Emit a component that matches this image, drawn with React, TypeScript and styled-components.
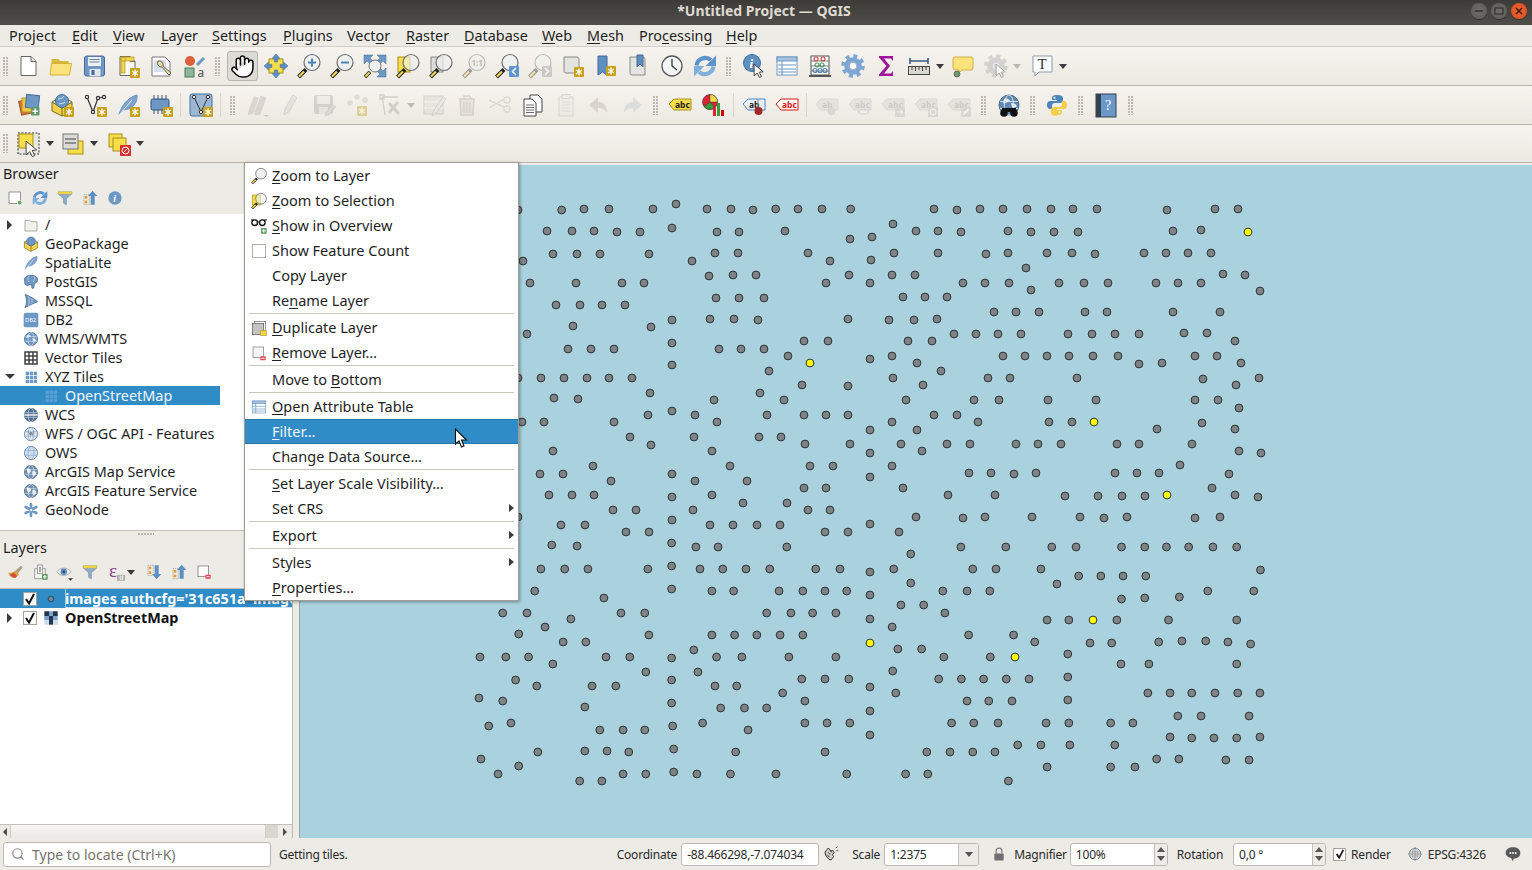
import React from 'react';
import styled, { createGlobalStyle } from 'styled-components';
import { Search, Hand } from 'lucide-react';

const Global = createGlobalStyle`
  html, body { margin: 0; padding: 0; width: 1532px; height: 870px; overflow: hidden; }
  body { font-family: "Noto Sans", "Open Sans", sans-serif; font-size: 14.4px; color: #1f1f1f; background: #edebe6; }
  * { box-sizing: border-box; }
`;

/* ---------- map data: points read from the picture, [x, y] ---------- */
const A: number[][] = [[24,60],[155,60],[222,57],[297,57],[429,57],[498,42],[591,57],[663,57],[729,60],[797,57],[864,57],[936,57],[1022,57],[111,123],[186,123],[252,123],[321,126],[390,126],[486,114],[621,126],[687,126],[825,123],[1020,147],[1086,141],[39,213],[129,192],[201,192],[270,192],[417,192],[546,213],[615,189],[684,189],[894,189],[960,213],[1083,210],[60,279],[198,279],[336,279],[402,279],[597,258],[669,255],[738,255],[948,279],[1017,255],[1080,279],[138,345],[210,345],[276,345],[345,345],[618,324],[687,324],[762,324],[51,432],[189,408],[423,411],[486,390],[600,387],[672,387],[744,390],[1014,387],[174,477],[243,477],[312,477],[486,459],[627,477],[693,477],[762,477],[882,453],[954,453],[834,498],[1080,507],[24,564],[93,564],[162,564],[231,564],[297,564],[366,564],[486,525],[777,543],[876,585],[1014,588],[132,624],[204,627],[420,609],[612,630],[750,609],[822,630],[36,696],[102,696],[312,696],[414,675],[486,663],[555,675],[621,696],[771,675],[882,675],[948,675],[1014,675],[1080,720],[360,741],[423,765],[552,741],[747,741],[813,741],[885,762],[1020,762],[129,783],[606,783],[1080,789],[249,828],[90,852],[159,852],[303,873],[486,852],[555,873],[660,828],[711,873],[900,828],[969,828],[1080,861],[117,915],[186,915],[252,915],[486,921],[606,915],[699,939],[831,939],[882,894],[948,894],[309,960],[378,960],[549,960],[894,960],[960,960],[24,981],[486,990],[153,1005],[225,1005],[600,1005],[669,1005],[741,1005],[810,1005],[1080,1002],[348,1026],[417,1026],[945,1026],[1014,1026]];
const B: number[][] = [[162,57],[231,60],[300,57],[369,57],[441,57],[513,57],[579,57],[651,57],[861,60],[1005,57],[1074,57],[39,102],[108,123],[174,123],[243,126],[384,123],[453,126],[522,126],[594,126],[879,123],[963,120],[42,189],[174,189],[318,192],[384,189],[501,189],[576,189],[645,192],[792,189],[858,189],[924,189],[993,189],[438,234],[36,255],[105,255],[249,279],[315,279],[387,279],[453,300],[537,279],[612,279],[684,279],[828,279],[894,279],[963,279],[1029,252],[1095,255],[1140,303],[69,321],[135,321],[201,321],[342,366],[408,366],[477,366],[615,366],[681,366],[879,366],[1020,366],[27,390],[102,390],[171,387],[222,432],[288,432],[354,432],[423,432],[564,432],[636,432],[705,432],[777,432],[912,429],[981,429],[1065,453],[84,453],[156,453],[36,498],[111,519],[369,498],[435,498],[501,498],[567,498],[639,498],[714,498],[777,522],[846,519],[945,498],[1011,498],[1083,519],[183,543],[39,564],[129,585],[324,564],[390,564],[591,564],[969,567],[1068,585],[1137,564],[78,630],[282,630],[357,630],[504,630],[648,630],[945,630],[1014,630],[1077,654],[162,675],[231,675],[36,696],[111,720],[294,696],[507,696],[576,696],[831,717],[966,699],[1065,717],[63,762],[126,783],[201,762],[270,762],[408,762],[474,762],[543,762],[711,762],[777,762],[936,762],[1077,783],[1143,789],[36,828],[267,849],[333,849],[402,852],[468,849],[705,849],[771,849],[837,849],[900,825],[1047,852],[69,894],[204,915],[345,915],[555,918],[654,918],[726,918],[795,918],[996,894],[1065,915],[1134,921],[108,981],[249,984],[315,981],[456,981],[600,981],[672,984],[741,981],[945,984],[1020,981],[57,1026]];
const C: number[][] = [[168,45],[217,48],[400,39],[447,51],[490,51],[623,51],[960,51],[1047,51],[1136,51],[1183,51],[1271,51],[1316,51],[1358,51],[1401,51],[1448,51],[1494,51],[863,72],[147,117],[193,117],[238,117],[354,117],[400,108],[455,117],[499,117],[544,117],[590,117],[679,117],[726,117],[784,126],[830,117],[983,117],[1028,117],[1115,117],[1188,138],[1231,138],[1274,138],[1318,138],[1540,120],[1146,162],[863,159],[135,183],[269,204],[400,177],[478,183],[520,183],[608,183],[654,183],[697,183],[739,183],[784,195],[925,183],[972,183],[1016,183],[1271,207],[1316,204],[1383,201],[1438,183],[1527,183],[73,249],[120,249],[205,267],[302,249],[348,249],[584,249],[631,249],[673,249],[718,249],[784,267],[844,225],[888,225],[929,249],[1127,270],[1169,270],[1262,270],[1362,270],[1494,270],[155,291],[104,312],[190,336],[234,336],[356,315],[478,315],[522,315],[565,315],[610,315],[654,315],[827,291],[975,315],[1062,315],[1103,336],[1210,339],[1252,339],[1343,336],[1388,333],[1434,333],[1477,336],[1521,342],[29,381],[79,381],[123,381],[170,402],[273,381],[319,381],[400,384],[443,360],[487,381],[536,381],[627,381],[718,381],[838,357],[884,357],[927,381],[1017,381],[1167,372],[1270,402],[1324,402],[1494,402],[98,450],[139,468],[246,468],[292,468],[350,426],[400,450],[451,426],[484,468],[526,468],[652,447],[697,447],[743,447],[784,471],[828,423],[917,447],[961,447],[1004,447],[1048,447],[1092,447],[1167,441],[27,504],[73,513],[232,531],[400,519],[495,534],[541,534],[584,534],[615,489],[658,513],[784,543],[834,489],[972,513],[1014,513],[1059,513],[1167,510],[1322,489],[1365,489],[1407,489],[1452,489],[1496,489],[1539,489],[46,588],[89,579],[261,600],[306,600],[348,600],[402,588],[460,579],[548,600],[658,579],[701,579],[745,579],[784,615],[942,579],[985,579],[1032,579],[1125,579],[1169,579],[1250,579],[1293,579],[1380,558],[1425,558],[1518,558],[141,666],[232,663],[275,663],[317,666],[404,657],[524,666],[697,666],[894,666],[939,666],[983,666],[1026,666],[1070,645],[1115,645],[1171,645],[1258,645],[1365,621],[1407,624],[1450,624],[1494,624],[1539,621],[31,687],[104,708],[64,732],[222,753],[265,753],[306,732],[350,732],[404,726],[449,732],[514,732],[602,732],[739,732],[853,732],[896,732],[1052,753],[1127,711],[1250,711],[1297,711],[1339,687],[1382,687],[1473,690],[1518,690]];
const ORIGIN_X = 300, ORIGIN_Y = 165;
const greyDots = [
  ...A.map(([x, y]) => [510 + x / 3, 190 + y / 3]),
  ...B.map(([x, y]) => [880 + x / 3, 190 + y / 3]),
  ...C.map(([x, y]) => [465 + x / 1.936, 530 + y / 3]),
];
const yellowDots = [[810,363],[1248,232],[1094,422],[1167,495],[1093,620],[870,643],[1015,657]];

/* ---------- icon pieces ---------- */
const Star = ({ x = 14, y = 14 }: { x?: number; y?: number }) => (
  <g transform={`translate(${x} ${y})`}>
    <rect width="10" height="10" rx="1" fill="#c9a01a" />
    <path d="M5 1.500v7M2 3l6 4M8 3L2 7" stroke="#fff" strokeWidth="1.300" />
  </g>
);
const PlusB = ({ x = 15, y = 15 }: { x?: number; y?: number }) => (
  <g transform={`translate(${x} ${y})`}>
    <rect width="8.500" height="8.500" rx="1" fill="#5f9a68" />
    <path d="M4.250 1.500v5.500M1.500 4.250h5.500" stroke="#fff" strokeWidth="1.500" />
  </g>
);
const MinusB = ({ x = 15, y = 17 }: { x?: number; y?: number }) => (
  <g transform={`translate(${x} ${y})`}>
    <rect width="8" height="6" rx="1" fill="#e8434c" />
    <path d="M1.500 3h5" stroke="#fff" strokeWidth="1.400" />
  </g>
);
const Mag = ({ lens = '#eef1f0', opacity = 1, children }: { lens?: string; opacity?: number; children?: React.ReactNode }) => (
  <g>
    <path d="M1.500 23L9 15.500" stroke="#222" strokeWidth="4" />
    <path d="M2 22.500L7 17.500" stroke="#f4d85a" strokeWidth="2.200" />
    <circle cx="15" cy="8.500" r="8" fill={lens} fillOpacity={opacity} stroke="#6b6f6f" strokeWidth="1.200" />
    {children}
  </g>
);
const Page = ({ fill = '#fff', stroke = '#666' }: { fill?: string; stroke?: string }) => (
  <g>
    <path d="M4 2.500h10l5 5v14H4z" fill={fill} stroke={stroke} />
    <path d="M14 2.500v5h5" fill="#ddd" stroke={stroke} />
  </g>
);
const Globe = ({ fill = '#6d97c4', line = '#fff' }: { fill?: string; line?: string }) => (
  <g>
    <circle cx="12" cy="12" r="10" fill={fill} stroke="#46688f" />
    <ellipse cx="12" cy="12" rx="4.500" ry="10" fill="none" stroke={line} strokeOpacity=".7" />
    <path d="M3 8.500h18M3 15.500h18" stroke={line} strokeOpacity=".7" />
  </g>
);
const Label = ({ fill, stroke, color, text = 'abc', x = 5 }: { fill: string; stroke: string; color: string; text?: string; x?: number }) => (
  <g>
    <path d="M1 11l5-5h17v11H6z" fill={fill} stroke={stroke} />
    <text x={x + 2} y="15" fontSize="8.500" fontWeight="700" fill={color} fontFamily="Noto Sans">{text}</text>
  </g>
);
const Feather = ({ s = '#6d97c4' }: { s?: string }) => (
  <g>
    <path d="M3 22C5 13 12 4 21 2c1 7-4 14-13 15" fill="#7ea3cc" stroke={s} />
    <path d="M3 22L16 7" stroke="#fff" strokeWidth=".8" />
  </g>
);
const Vertex = () => (
  <g fill="none" stroke="#333" strokeWidth="1.200">
    <path d="M4 4l6 15 5-14 6-1" />
    <circle cx="4" cy="4" r="1.600" fill="#fff" />
    <circle cx="10" cy="19" r="1.600" fill="#fff" />
    <circle cx="15" cy="5" r="1.600" fill="#fff" />
    <circle cx="21" cy="4" r="1.600" fill="#fff" />
  </g>
);
const Gear = ({ c = '#7ea6d3' }: { c?: string }) => (
  <g fill="none" stroke={c}>
    <circle cx="12" cy="12" r="10" strokeWidth="3.600" strokeDasharray="4 3.850" />
    <circle cx="12" cy="12" r="6.500" strokeWidth="4.500" />
    <circle cx="12" cy="12" r="3.800" fill="#fff" stroke="#4a76a6" strokeWidth=".6" />
  </g>
);
const Arrow = () => <path d="M12 10l.2 12 3-3 2.200 4.500 2-1-2.200-4.300 4-.4z" fill="#fff" stroke="#333" strokeWidth=".9" />;
const GridDots = ({ c }: { c: string }) => (
  <g fill={c}>
    {[3, 9, 15].map((x) => [3, 9, 15].map((y) => <rect key={`${x}${y}`} x={x + 1} y={y + 1} width="5" height="5" />))}
  </g>
);
const Bucket = () => (
  <g>
    <path d="M2 3h20v3l-8 7v9l-4-2v-7L2 6z" fill="#8faccb" stroke="#6f8fb0" />
    <path d="M2 2.500h20v3.500H2z" fill="#f3d94e" stroke="#c9ab2c" strokeWidth=".6" />
  </g>
);
const Refresh = () => (
  <g>
    <g fill="none" strokeWidth="4.200">
      <path d="M3.500 11.500A8.800 8.800 0 0 1 18 6" stroke="#5d94cb" />
      <path d="M20.500 12.500A8.800 8.800 0 0 1 6 18" stroke="#7fb0dc" />
    </g>
    <path d="M23 1.500v10.500H12.500z" fill="#5d94cb" />
    <path d="M1 22.500V12h10.500z" fill="#7fb0dc" />
  </g>
);
const TableI = () => (
  <g>
    <rect x="2" y="3" width="20" height="18" fill="#fff" stroke="#6d97c4" />
    <rect x="2" y="3" width="20" height="4" fill="#a9c2dd" stroke="#6d97c4" />
    <path d="M7 7v14M3 11h18M3 15h18M3 18h18" stroke="#6d97c4" />
  </g>
);

const icons: Record<string, React.ReactNode> = {
  new: <Page />,
  open: <g transform="translate(-1.500 0)"><path d="M3 20V5h7l2 2h8v13z" fill="#d7b83c" /><path d="M1.500 21L3 9.500h20L21 21z" fill="#fbe27a" stroke="#d4b23a" /></g>,
  save: <g transform="translate(-.5 0)"><rect x="2" y="2" width="20" height="20" rx="2" fill="#6d97c4" stroke="#47699a" /><rect x="5.500" y="3" width="13" height="9" fill="#eef2f6" /><path d="M7 5.500h10M7 8h10" stroke="#6d7f95" /><rect x="7" y="15" width="11" height="7" fill="#dfe6ee" /><rect x="9" y="16" width="3" height="5" fill="#47699a" /></g>,
  newLayout: <g><Page fill="#fbfbf8" /><path d="M5 3h4v16H5zM5 3h13v4H5z" fill="#f0d34f" stroke="#b59a1e" strokeWidth=".7" /><Star /></g>,
  layoutMgr: <g><path d="M3 3h13l5 5v14H3z" fill="#fff" stroke="#777" /><rect x="5" y="6" width="12" height="12" fill="#d5e0ea" /><path d="M9 7a4 4 0 0 0 4 6l7 8 2-2-8-7a4 4 0 0 0-5-5z" fill="#eadd9a" stroke="#555" strokeWidth=".9" /></g>,
  style: <g><circle cx="8" cy="7" r="5" fill="#d9603b" /><path d="M15 11l7-7" stroke="#6d97c4" strokeWidth="3" /><rect x="3" y="14" width="9" height="9" fill="#8fb59a" stroke="#4c7a5c" /><text x="15.500" y="22.500" fontSize="12" fill="#555" fontFamily="Noto Sans">a</text></g>,
  panSel: <g><rect x="5" y="5" width="14" height="14" fill="#f6de4b" stroke="#a98f1a" /><path d="M12 0l4 4.500h-2.400V8h-3.200V4.500H8zM12 24l4-4.500h-2.400V16h-3.200v3.500H8zM0 12l4.500-4v2.400H8v3.200H4.500V16zM24 12l-4.500-4v2.400H16v3.200h3.500V16z" fill="#5d8fc0" stroke="#3d6a99" strokeWidth=".5" /></g>,
  zoomIn: <Mag><path d="M15 4.500v8M11 8.500h8" stroke="#4f82b5" strokeWidth="2" /></Mag>,
  zoomOut: <Mag><path d="M11 8.500h8" stroke="#4f82b5" strokeWidth="2" /></Mag>,
  zoomFull: <g><path d="M1 1h9L7 4l3 3-3 3-3-3-3 3zM23 1h-9l3 3-3 3 3 3 3-3 3 3zM23 23h-9l3-3-3-3 3-3 3 3 3-3z" fill="#6d97c4" stroke="#3f6a95" strokeWidth=".5" /><path d="M2 23l5-5" stroke="#222" strokeWidth="3.500" /><path d="M2.500 22.500l4-4" stroke="#f4d85a" strokeWidth="2" /><circle cx="12" cy="12" r="6" fill="#eef1f0" stroke="#777" /></g>,
  zoomSel: <g><rect x="2" y="3" width="12" height="15" fill="#f6de4b" stroke="#a98f1a" /><Mag lens="#eef1f0" opacity={0.65} /></g>,
  zoomLayer: <g><rect x="2" y="3" width="12" height="15" fill="#dedcd8" stroke="#8a8a8a" /><Mag lens="#eef1f0" opacity={0.7} /></g>,
  zoom11: <Mag><text x="9.500" y="11.500" fontSize="8" fontWeight="700" fill="#666" fontFamily="Noto Sans">1:1</text></Mag>,
  zoomLast: <g><Mag /><rect x="14" y="12" width="10" height="11" rx="1" fill="#5d94cb" /><path d="M21 14l-3.500 3.500L21 21" stroke="#fff" strokeWidth="1.600" fill="none" /></g>,
  zoomNext: <g><Mag /><rect x="14" y="12" width="10" height="11" rx="1" fill="#999" /><path d="M17 14l3.500 3.500L17 21" stroke="#fff" strokeWidth="1.600" fill="none" /></g>,
  newView: <g><path d="M3 3h13c2 0 2 2 2 4v12H5c-2 0-2-2-2-3z" fill="#e3e3df" stroke="#888" /><Star x={13} y={13} /></g>,
  newBookmark: <g><path d="M4 2h9v19l-4.500-3L4 21z" fill="#5d8fc0" stroke="#47699a" /><Star x={12} y={12} /></g>,
  showBookmark: <g><path d="M3 3h13c2 0 2 2 2 4v14H5c-2 0-2-2-2-3z" fill="#e3e3df" stroke="#888" /><path d="M10 1h6v12l-3-3-3 3z" fill="#5d8fc0" stroke="#47699a" /></g>,
  clock: <g><circle cx="12" cy="12" r="10" fill="#f3f4f4" stroke="#55595c" strokeWidth="1.300" /><path d="M12 5v7l5 4" stroke="#333" strokeWidth="1.300" fill="none" /></g>,
  refresh: <Refresh />,
  identify: <g><circle cx="10" cy="9" r="8.500" fill="#5d8fc0" stroke="#44709d" /><text x="7.500" y="14" fontSize="13" fontWeight="700" fontStyle="italic" fill="#fff" fontFamily="Liberation Serif">i</text><Arrow /></g>,
  table: <TableI />,
  abacus: <g><rect x="3" y="2" width="18" height="19" fill="#fff" stroke="#555" /><path d="M3 7h18M3 12h18M3 17h18" stroke="#777" /><path d="M1 22h22" stroke="#555" strokeWidth="2" /><g fill="none" strokeWidth="1.200"><g stroke="#c44"><circle cx="8" cy="5" r="2" /><circle cx="15" cy="5" r="2" /></g><g stroke="#4a9a60"><circle cx="9" cy="11" r="2" /><circle cx="14" cy="11" r="2" /></g><g stroke="#4f82b5"><circle cx="7" cy="16.500" r="2" /><circle cx="12" cy="16.500" r="2" /><circle cx="17" cy="16.500" r="2" /></g></g></g>,
  gear: <Gear />,
  sigma: <path d="M5 2h14v5l-2-2.500H10l6 7.500-6 7.500h7l2-2.500v5H5v-1.500l7.500-8.500L5 3.500z" fill="#a0139c" />,
  ruler: <g><path d="M3 7h18M3 4v6M21 4v6" stroke="#3a5a80" strokeWidth="1.600" /><rect x="1.500" y="12.500" width="21" height="8" fill="#d8d8d0" stroke="#444" /><path d="M5 13v3M8.500 13v4M12 13v3M15.500 13v4M19 13v3" stroke="#444" /></g>,
  tip: <g><path d="M3 3h18a2 2 0 0 1 1 2v9a2 2 0 0 1-2 2H11l-3 3v-3H4a2 2 0 0 1-2-2V5z" fill="#fce27a" stroke="#cfae4c" /><circle cx="6" cy="20" r="3" fill="#6d9a68" stroke="#555" strokeWidth=".7" /></g>,
  action: <g><Gear c="#aaa" /><path d="M9.500 8l6 4-6 4z" fill="#ccc" /><Arrow /></g>,
  text: <g><path d="M3 2h19v16H9l-4 4v-4H3z" fill="#fff" stroke="#8a9aa8" /><text x="7.500" y="15" fontSize="15" fill="#333" fontFamily="Liberation Serif">T</text></g>,
  dsm: <g><rect x="3" y="7" width="13" height="14" fill="#d5703c" stroke="#a54f23" transform="rotate(-12 9 14)" /><rect x="5" y="5" width="13" height="14" fill="#f0c840" stroke="#b5951e" /><rect x="9" y="2" width="13" height="13" fill="#6d97c4" stroke="#44709d" transform="rotate(6 15 8)" /><PlusB x={14} y={14} /></g>,
  gpkgNew: <g><path d="M2 9l10 6 10-6v9l-10 5-10-5z" fill="#f2d24a" stroke="#7c6a1c" /><path d="M12 15v8" stroke="#7c6a1c" /><path d="M2 9l10-6 10 6-10 6z" fill="#eee" stroke="#7c6a1c" /><circle cx="12" cy="8" r="6.500" fill="#6d97c4" stroke="#44709d" /><path d="M8 6c3 0 5-1 6-3M9 11c2-1 5 0 6-2" stroke="#d6e2ee" fill="none" /><Star /></g>,
  shpNew: <g><Vertex /><Star /></g>,
  spatNew: <g><Feather /><Star /></g>,
  tempNew: <g><rect x="2" y="6" width="18" height="11" rx="1.500" fill="#6d97c4" stroke="#33557a" /><path d="M5 2v4M9 2v4M13 2v4M17 2v4M5 17v4M9 17v4M13 17v4" stroke="#33557a" /><Star /></g>,
  meshNew: <g><rect x="1" y="1" width="22" height="22" rx="2" fill="#9db7d2" stroke="#44709d" /><path d="M5 4l7 15 7-15" stroke="#333" fill="none" /><circle cx="5" cy="4" r="1.700" fill="#fff" stroke="#333" /><circle cx="12" cy="19" r="1.700" fill="#fff" stroke="#333" /><circle cx="19" cy="4" r="1.700" fill="#fff" stroke="#333" /><Star /></g>,
  editAll: <g fill="#bbb6ac"><path d="M2 19L8 3l5 2-6 16-5 1z" /><path d="M9 19l6-16 5 2-6 16-5 1z" stroke="#999" strokeWidth=".5" /><path d="M17 22l3 2 3-2z" fill="#999" /></g>,
  edit: <g><path d="M5 22l1-6L14 2l4 2.500-8 14z" fill="#d5d2c9" stroke="#aaa" /></g>,
  saveEdit: <g><rect x="2" y="2" width="19" height="19" rx="2" fill="#aaa" /><rect x="5" y="3" width="13" height="8" fill="#e6e6e0" /><rect x="7" y="14" width="9" height="7" fill="#d8d8d0" /><path d="M13 23l1-4 7-7 3 2-7 8z" fill="#bbb" stroke="#999" strokeWidth=".5" /></g>,
  dots: <g fill="#c4c1b9"><circle cx="5" cy="10" r="2.800" /><circle cx="12" cy="4" r="2.800" /><circle cx="20" cy="7" r="2.800" /><Star x={12} y={13} /></g>,
  vertexTool: <g fill="none" stroke="#a8a59d" strokeWidth="1.300"><path d="M4 4h16M4 4l3 18" /><rect x="2" y="2" width="4" height="4" /><path d="M11 10l10 11M20 9l-9 11" strokeWidth="3" /></g>,
  tableEdit: <g><rect x="2" y="3" width="19" height="18" fill="#dad7cc" stroke="#a8a59d" /><path d="M2 9h19M2 15h19" stroke="#f2f1ec" strokeWidth="1.500" /><path d="M10 23l2-6 9-13 3 2-9 13z" fill="#e2e1dc" stroke="#aaa" /></g>,
  trash: <g fill="none" stroke="#b7ada8" strokeWidth="1.600"><path d="M4 6h16M9 6V3h6v3" /><path d="M5 6h14l-1 16H6z" fill="#d8d3cf" /><path d="M9 9v11M12 9v11M15 9v11" /></g>,
  cut: <g fill="none" stroke="#bdbab2" strokeWidth="1.400"><path d="M1 7l15 7M1 15l15-9" /><circle cx="19" cy="16" r="3" /><circle cx="19" cy="7" r="3" /></g>,
  copy: <g fill="#fff" stroke="#444"><path d="M9 2h8l4 4v13H9z" /><path d="M3 6h8l4 4v13H3z" /><path d="M5 12h8M5 14.500h8M5 17h8M5 19.500h8" strokeWidth=".8" /></g>,
  paste: <g stroke="#b9b6ae" fill="#ebe9e4"><path d="M5 4h14v19H5z" /><rect x="8" y="1.500" width="8" height="4" /><path d="M8 9h8M8 12h8M8 15h8M8 18h8" strokeWidth=".8" /></g>,
  undo: <path d="M11 4L2 12l9 8v-5c5 0 7 2 9 5 0-7-3-11-9-11z" fill="#dbd4cf" />,
  redo: <path d="M13 4l9 8-9 8v-5c-5 0-7 2-9 5 0-7 3-11 9-11z" fill="#dcdedb" />,
  labelY: <Label fill="#f6de4b" stroke="#a98f1a" color="#222" />,
  diagram: <g><circle cx="9" cy="9" r="7.500" fill="#d23" stroke="#333" strokeWidth=".6" /><path d="M9 9V1.500A7.500 7.500 0 0 1 16.500 9z" fill="#f6de4b" stroke="#333" strokeWidth=".5" /><path d="M9 9l-6 4.500A7.500 7.500 0 0 0 14 14.500z" fill="#3a9a3c" stroke="#333" strokeWidth=".5" /><rect x="12" y="14" width="3" height="9" fill="#d23" /><rect x="16" y="10" width="3" height="13" fill="#3a9a3c" /><rect x="20" y="17" width="3" height="6" fill="#c00" /></g>,
  labelPin: <g><Label fill="#e8eef5" stroke="#4a86c9" color="#222" text="ab" /><path d="M16 6v9" stroke="#888" /><circle cx="16.500" cy="18" r="4" fill="#a12828" /></g>,
  labelRed: <Label fill="#fff" stroke="#dd1515" color="#dd1515" />,
  labelD1: <g><Label fill="#d6d3cc" stroke="#bbb" color="#999" text="ab" /><circle cx="16.500" cy="18" r="4" fill="#bbb" /></g>,
  labelD2: <g><Label fill="#d6d3cc" stroke="#bbb" color="#999" /><path d="M10 19c3-3 8-3 11 0-3 3-8 3-11 0z" fill="#eee" stroke="#aaa" /></g>,
  labelD3: <g><Label fill="#d6d3cc" stroke="#bbb" color="#999" /><rect x="14" y="14" width="10" height="10" rx="1" fill="#bbb" /><path d="M16 19h5M19 16.500l2.500 2.500-2.500 2.500" stroke="#fff" fill="none" /></g>,
  labelD4: <g><Label fill="#d6d3cc" stroke="#bbb" color="#999" /><rect x="14" y="14" width="10" height="10" rx="1" fill="#bbb" /><circle cx="19" cy="19" r="3" fill="none" stroke="#fff" /></g>,
  labelD5: <g><Label fill="#d6d3cc" stroke="#bbb" color="#999" /><rect x="14" y="14" width="10" height="10" rx="1" fill="#bbb" /><path d="M16 22l1-3 4-3 1 1-4 4z" fill="#fff" /></g>,
  metasearch: <g><Globe fill="#5f87b2" /><path d="M7 6c3-1 5 0 6 2-2 2-5 1-7 3zM14 10c3 0 5 1 6 3-2 2-3 2-5 1z" fill="#e3ecf4" /><circle cx="7" cy="20" r="3.800" fill="#111" /><circle cx="17" cy="20" r="3.800" fill="#111" /><rect x="5" y="15" width="14" height="4" fill="#111" /></g>,
  python: <g><path d="M12 2c-4 0-5 1-5 3v2h5v1H5c-2 0-3 2-3 4s1 4 3 4h2v-3c0-2 1-3 3-3h5c1.500 0 3-1 3-3V5c0-2-2-3-6-3z" fill="#4d86b8" /><path d="M12 22c4 0 5-1 5-3v-2h-5v-1h7c2 0 3-2 3-4s-1-4-3-4h-2v3c0 2-1 3-3 3H9c-1.500 0-3 1-3 3v3c0 2 2 3 6 3z" fill="#f4cf45" /><circle cx="9.500" cy="4.800" r="1" fill="#fff" /><circle cx="14.500" cy="19.200" r="1" fill="#fff" /></g>,
  help: <g><rect x="2" y="1" width="20" height="23" fill="#6b97c9" /><rect x="2" y="1" width="5" height="23" fill="#34404e" /><rect x="2" y="1" width="20" height="23" fill="none" stroke="#34404e" /><text x="11" y="17" fontSize="14" fill="#fff" fontFamily="Liberation Serif">?</text></g>,
  selectF: <g><rect x="1" y="1" width="21" height="21" fill="#e8e7e2" stroke="#333" strokeDasharray="2 1.500" /><rect x="2" y="2" width="14" height="14" fill="#f6de4b" stroke="#a98f1a" /><path d="M9 9l.2 14 3.500-3.500 2.500 5 2.500-1-2.500-5 4.500-.5z" fill="#fff" stroke="#333" strokeWidth=".9" /></g>,
  selAttr: <g><rect x="7" y="9" width="15" height="13" fill="#f6de4b" stroke="#a98f1a" /><rect x="2" y="2" width="15" height="15" fill="#dcdad5" stroke="#777" /><path d="M4 7h11M4 11h11" stroke="#777" strokeWidth="1.500" /></g>,
  deselect: <g><rect x="2" y="2" width="13" height="13" fill="#f6de4b" stroke="#a98f1a" /><rect x="6" y="6" width="13" height="13" fill="#f6de4b" stroke="#a98f1a" /><rect x="13" y="13" width="11" height="11" rx="1" fill="#dc2b2b" /><circle cx="18.500" cy="18.500" r="3.500" fill="none" stroke="#fff" /><path d="M16 21l5-5" stroke="#fff" /></g>,

  addSel: <g><rect x="3" y="3" width="17" height="17" fill="#fff" stroke="#666" /><circle cx="19" cy="19" r="3.500" fill="#6ca06c" stroke="#fff" /></g>,
  filter: <Bucket />,
  collapse: <g><rect x="3" y="7" width="8" height="15" fill="none" stroke="#999" strokeDasharray="2 1" /><rect x="4" y="9" width="4" height="4" fill="#f0a030" /><rect x="4" y="16" width="4" height="4" fill="#f0a030" /><path d="M16 1l7 8h-4v13h-6V9H9z" fill="#5d8fc0" /></g>,
  expand: <g><rect x="3" y="2" width="8" height="15" fill="none" stroke="#999" strokeDasharray="2 1" /><rect x="4" y="4" width="4" height="4" fill="#f0a030" /><rect x="4" y="11" width="4" height="4" fill="#f0a030" /><path d="M16 23l7-8h-4V2h-6v13H9z" fill="#5d8fc0" /></g>,
  info: <g><circle cx="12" cy="12" r="10" fill="#6d97c4" /><text x="9.500" y="18" fontSize="15" fontWeight="700" fontStyle="italic" fill="#fff" fontFamily="Liberation Serif">i</text></g>,
  brush: <g><path d="M2 13c4 1 8-1 10-3l6 6c-3 3-5 5-8 5-3 0-7-4-8-8z" fill="#d2a43a" /><path d="M4 17l6-4 5 5-3 3" fill="#d64a3a" /><path d="M13 10l8-7 2 2-7 9z" fill="#b9a06a" stroke="#777" strokeWidth=".5" /></g>,
  addGroup: <g><path d="M4 7h16v15H4z" fill="#f4f3ee" stroke="#777" /><rect x="8" y="1.500" width="8" height="13" fill="#fff" stroke="#777" /><rect x="11" y="4" width="2" height="8" fill="#777" /><PlusB x={15} y={15} /></g>,
  eye: <g><path d="M1 11c5-7 15-7 20 0-5 7-15 7-20 0z" fill="#e8ecec" stroke="#999" /><circle cx="11" cy="11" r="4.500" fill="#5d8fc0" /><circle cx="11" cy="11" r="1.800" fill="#2d4a6b" /><path d="M17 20l3.500 3.500L24 20z" fill="#333" /></g>,
  expr: <g><text x="0" y="18" fontSize="27" fill="#8c3f8e" fontFamily="Liberation Serif">ε</text><path d="M12 16h10v7H12z" fill="#bbb" stroke="#999" /><path d="M16 16v7M19 16v7" stroke="#fff" /></g>,
  removeLyr: <g><rect x="3" y="3" width="16" height="16" fill="#fff" stroke="#666" /><MinusB x={14} y={16} /></g>,

  folder: <path d="M3 5h7l2 2h9v14H3z" fill="#f2f1ec" stroke="#858580" />,
  gpkg: <g><path d="M2 9l10 6 10-6v9l-10 5-10-5z" fill="#f2d24a" stroke="#7c6a1c" /><path d="M12 15v8" stroke="#7c6a1c" /><path d="M2 9l10-6 10 6-10 6z" fill="#eee" stroke="#7c6a1c" /><circle cx="12" cy="8" r="6.500" fill="#6d97c4" stroke="#44709d" /></g>,
  feather: <Feather />,
  pg: <g><path d="M2 9c0-5 5-7 10-7 5 0 10 2 10 7 0 3-2 4-3 4-1 0-1 2-2 3l-1 5c-2 2-3 0-3-2v-3c-1 .5-3 .5-4 0-1 1-2 2-4 1-3-1-2-5-3-8z" fill="#6d97c4" stroke="#3f5f82" /><path d="M9 3c-2 2-2 6 0 9M16 3c2 2 2 6-1 9" stroke="#d9e4ef" fill="none" /></g>,
  mssql: <g><path d="M3 2c6 2 13 6 19 11C16 15 9 19 3 22c3-7 3-13 0-20z" fill="#6d97c4" stroke="#3f5f82" /><path d="M8 5c2 4 2 9 0 14M13 8c1 3 1 5 0 8" stroke="#d9e4ef" fill="none" /></g>,
  db2: <g><rect x="1" y="1" width="22" height="22" rx="3" fill="#6d97c4" /><text x="3" y="15.500" fontSize="8.500" fill="#fff" fontFamily="Noto Sans">DB2</text></g>,
  wms: <g><Globe /><path d="M6 6c3-1 5 0 6 2-2 2-5 1-7 3zM14 11c3 0 5 1 6 3-2 2-3 2-5 1z" fill="#fff" fillOpacity=".75" /></g>,
  grid: <g fill="none" stroke="#444" strokeWidth="2.300"><rect x="3" y="3" width="18" height="18" /><path d="M9 3v18M15 3v18M3 9h18M3 15h18" /></g>,
  xyz: <GridDots c="#6d97c4" />,
  xyzSel: <GridDots c="#5a9fd4" />,
  wcs: <g><Globe fill="#4f6f91" /><path d="M2 12h20" stroke="#fff" strokeWidth="2" /></g>,
  wfs: <g><Globe fill="#dce6f0" line="#6d97c4" /><path d="M8 8l3 6 1-5 2 5 2-6" stroke="#555" fill="none" /></g>,
  ows: <Globe fill="#cfdfef" line="#6d97c4" />,
  arc: <g><Globe fill="#6d8dab" /><path d="M6 6c3 2 5 1 6 4s-3 2-3 5c-2-1-4-5-3-9zM14 11c3-1 5 0 6 2-1 3-3 5-5 6 0-3-2-5-1-8z" fill="#fff" fillOpacity=".8" /></g>,
  geonode: <g stroke="#6d97c4" strokeWidth="4" strokeLinecap="round"><path d="M12 3v18M4 7.500l16 9M20 7.500l-16 9" /><circle cx="12" cy="12" r="2" fill="#fff" stroke="none" /></g>,
  magIcon: <Mag />,
  magSel: <g><rect x="2" y="3" width="12" height="15" fill="#f6de4b" stroke="#a98f1a" /><Mag opacity={0.6} /></g>,
  overview: <g><circle cx="5.500" cy="7" r="4.200" fill="none" stroke="#111" strokeWidth="2" /><circle cx="17" cy="7" r="4.200" fill="none" stroke="#111" strokeWidth="2" /><path d="M9.500 6h4M0 3h4M19 3h5" stroke="#111" strokeWidth="1.600" /><PlusB x={15} y={15} /></g>,
  duplicate: <g><rect x="5" y="2" width="17" height="17" fill="#fff" stroke="#666" /><rect x="2" y="5" width="17" height="17" fill="#c7c5bf" stroke="#555" /><rect x="14" y="16" width="9" height="7" fill="#f0d34f" stroke="#b59a1e" /></g>,
  removeMenu: <g><rect x="3" y="3" width="16" height="16" fill="#f5f5f3" stroke="#777" /><MinusB x={14} y={17} /></g>,
  pointSym: <circle cx="12" cy="12" r="4" fill="#7d8a8e" stroke="#31597a" strokeWidth="2" />,
  osm: <g><rect x="2" y="2" width="20" height="20" fill="#fff" /><path d="M2 2h7v7H2zM15 2h7v7h-7zM9 9h6v6H9z" fill="#20344f" /><path d="M9 2h6v7H9zM2 9h7v6H2zM15 9h7v6h-7z" fill="#7fa2c8" /><path d="M2 15h7v7H2zM15 15h7v7h-7z" fill="#ccdcea" /><path d="M9 15h6v7H9z" fill="#20344f" /></g>,
  wand: <g><path d="M3 9l5-6 4 5 2-2 3 4-3 3 2 3-4 5-3-1-5-6z" fill="#d8d6d0" stroke="#333" strokeWidth="1.500" /><path d="M7 9l4 4M10 6l4 4M6 13l4 4" stroke="#333" strokeWidth="1.500" /><path d="M19 3l3-2M20 7h3" stroke="#555" strokeWidth="1.500" /></g>,
  lock: <g><path d="M7 11V7a5 5 0 0 1 10 0v4" fill="none" stroke="#7a7a7a" strokeWidth="2" /><rect x="4" y="11" width="16" height="12" rx="1.500" fill="#6f6f6f" /></g>,
  crs: <g><Globe fill="#e5e3de" line="#6d7276" /><path d="M0 12h24M12 0v24" stroke="#6d7276" /></g>,
  bubble: <g><path d="M12 2c6 0 11 3 11 8.500S18 19 13 19l-1 4-3-5C4 17 1 14 1 10.500 1 5 6 2 12 2z" fill="#585858" /><circle cx="8" cy="10.500" r="1.400" fill="#fff" /><circle cx="12" cy="10.500" r="1.400" fill="#fff" /><circle cx="16" cy="10.500" r="1.400" fill="#fff" /></g>,
};

/* ---------- shell ---------- */
const Page_ = styled.div`
  width: 1532px;
  height: 870px;
  display: flex;
  flex-direction: column;
  position: relative;
  overflow: hidden;
`;
const TitleBar = styled.div`
  height: 25px;
  flex: none;
  background: linear-gradient(#3c3b37, #4f4e49);
  color: #dfdbd2;
  font-weight: 700;
  font-size: 14px;
  display: flex;
  align-items: center;
  justify-content: center;
  padding: 0 4px 4px 0;
  position: relative;
`;
const WindowButtons = styled.div`
  position: absolute;
  right: 5px;
  top: 3px;
  display: flex;
  gap: 4px;
`;
const WinBtn = styled.span<{ $close?: boolean }>`
  width: 16px;
  height: 16px;
  border-radius: 50%;
  background: ${(p) => (p.$close ? 'radial-gradient(#f0693a, #d9481c)' : 'radial-gradient(#6f6e6a, #5b5a55)')};
  box-shadow: 0 1px 0 rgba(0, 0, 0, 0.35);
  display: flex;
  align-items: center;
  justify-content: center;
`;
const MenuBar = styled.div`
  height: 22px;
  flex: none;
  background: #edebe6;
  border-bottom: 1px solid #d3d0ca;
  display: flex;
  align-items: center;
  padding-left: 9px;
  font-size: 14.4px;
`;
const MenuTitle = styled.span<{ $w: number }>`
  width: ${(p) => p.$w}px;
  flex: none;
  white-space: nowrap;
`;
const U = styled.span`
  text-decoration: underline;
  text-underline-offset: 2px;
`;
const Toolbar = styled.div<{ $h: number }>`
  height: ${(p) => p.$h}px;
  flex: none;
  background: linear-gradient(#f7f4ef, #ece9e3);
  border-bottom: 1px solid #b8b3ad;
  display: flex;
  align-items: center;
`;
const ToolButton = styled.div<{ $w?: number; $active?: boolean }>`
  width: ${(p) => p.$w ?? 33}px;
  height: 30px;
  flex: none;
  display: flex;
  align-items: center;
  ${(p) => (p.$active ? 'margin: 0 1px; width: 31px; background: #dddbd6; border: 1px solid #b7b4ae; border-radius: 3px;' : '')}
`;
const IconSlot = styled.span<{ $w: number }>`
  width: ${(p) => p.$w}px;
  flex: none;
  display: flex;
  align-items: center;
  justify-content: center;
`;
const Drop = styled.span<{ $c?: string }>`
  width: 0;
  height: 0;
  flex: none;
  margin-left: 1px;
  border-left: 4.500px solid transparent;
  border-right: 4.500px solid transparent;
  border-top: 5px solid ${(p) => p.$c ?? '#3a3a3a'};
`;
const HandleBox = styled.div<{ $w: number }>`
  width: ${(p) => p.$w}px;
  flex: none;
  display: flex;
  justify-content: center;
`;
const HandleDots = styled.span`
  width: 6px;
  height: 19px;
  background-image: radial-gradient(circle at 1px 1px, #bdb9b2 0.8px, transparent 0.9px);
  background-size: 3px 3px;
`;
const ToolSep = styled.div<{ $w: number }>`
  width: ${(p) => p.$w}px;
  flex: none;
  display: flex;
  justify-content: center;
  &::after {
    content: '';
    width: 1px;
    height: 24px;
    background: #d9d6cf;
  }
`;
const Svg = styled.svg<{ $dim?: boolean }>`
  display: block;
  flex: none;
  overflow: visible;
  ${(p) => (p.$dim ? 'opacity: 0.42;' : '')}
`;

const Icon = ({ n, s = 24, dim }: { n: string; s?: number; dim?: boolean }) => (
  <Svg width={s} height={s} viewBox="0 0 24 24" $dim={dim}>{icons[n]}</Svg>
);

/* ---------- toolbars ---------- */
type Tool = { i?: string; d?: boolean; w?: number; drop?: boolean; h?: number; s?: number; a?: boolean };
const tb1: Tool[] = [
  { h: 12 }, { i: 'new' }, { i: 'open' }, { i: 'save' }, { i: 'newLayout' }, { i: 'layoutMgr' }, { i: 'style' }, { h: 16 },
  { i: 'pan', a: true }, { i: 'panSel' }, { i: 'zoomIn' }, { i: 'zoomOut' }, { i: 'zoomFull' }, { i: 'zoomSel' }, { i: 'zoomLayer' },
  { i: 'zoom11', d: true }, { i: 'zoomLast' }, { i: 'zoomNext', d: true }, { i: 'newView' }, { i: 'newBookmark' }, { i: 'showBookmark' },
  { i: 'clock' }, { i: 'refresh' }, { h: 16 }, { i: 'identify' }, { i: 'table' }, { i: 'abacus' }, { i: 'gear' }, { i: 'sigma' },
  { i: 'ruler', drop: true, w: 44 }, { i: 'tip' }, { i: 'action', d: true, drop: true, w: 46 }, { i: 'text', drop: true, w: 44 },
];
const tb2: Tool[] = [
  { h: 12 }, { i: 'dsm' }, { i: 'gpkgNew' }, { i: 'shpNew' }, { i: 'spatNew' }, { i: 'tempNew' }, { s: 7 }, { i: 'meshNew' }, { s: 7 }, { h: 17 },
  { i: 'editAll', d: true }, { i: 'edit', d: true }, { i: 'saveEdit', d: true }, { i: 'dots', d: true }, { i: 'vertexTool', d: true, drop: true, w: 44 },
  { i: 'tableEdit', d: true }, { i: 'trash', d: true }, { i: 'cut', d: true }, { i: 'copy' }, { i: 'paste', d: true }, { i: 'undo' }, { i: 'redo' }, { h: 15 },
  { i: 'labelY' }, { i: 'diagram' }, { s: 8 }, { i: 'labelPin' }, { i: 'labelRed' }, { s: 7 },
  { i: 'labelD1', d: true }, { i: 'labelD2', d: true }, { i: 'labelD3', d: true }, { i: 'labelD4', d: true }, { i: 'labelD5', d: true }, { h: 17 },
  { i: 'metasearch' }, { h: 15 }, { i: 'python' }, { h: 16 }, { i: 'help' }, { h: 18 },
];
const tb3: Tool[] = [
  { h: 12 }, { i: 'selectF', drop: true, w: 44 }, { i: 'selAttr', drop: true, w: 46 }, { i: 'deselect', drop: true, w: 44 },
];

const ToolRow = ({ items, h }: { items: Tool[]; h: number }) => (
  <Toolbar $h={h}>
    {items.map((t, k) =>
      t.h ? (
        <HandleBox key={k} $w={t.h}><HandleDots /></HandleBox>
      ) : t.s ? (
        <ToolSep key={k} $w={t.s} />
      ) : (
        <ToolButton key={k} $w={t.w} $active={t.a}>
          <IconSlot $w={t.a ? 29 : 33}>
            {t.a ? <Hand size={25} fill="#fff" color="#111" strokeWidth={1.5} /> : <Icon n={t.i!} dim={t.d} />}
          </IconSlot>
          {t.drop && <Drop $c={t.d ? '#bcb9b2' : undefined} />}
        </ToolButton>
      ),
    )}
  </Toolbar>
);

/* ---------- left panels ---------- */
const Body = styled.div`
  flex: 1;
  min-height: 0;
  display: flex;
`;
const LeftPanels = styled.div`
  width: 293px;
  flex: none;
  display: flex;
  flex-direction: column;
  background: #edebe6;
  border-right: 1px solid #bdb9b3;
`;
const DockTop = styled.div`
  height: 368px;
  flex: none;
  display: flex;
  flex-direction: column;
`;
const DockTitle = styled.div`
  height: 22px;
  flex: none;
  padding: 0 3px 2px;
  display: flex;
  align-items: center;
`;
const DockIcons = styled.div`
  height: 29px;
  flex: none;
  padding: 0 0 3px 2px;
  display: flex;
  align-items: center;
`;
const DockBtn = styled.span<{ $w?: number }>`
  width: ${(p) => p.$w ?? 25}px;
  flex: none;
  display: flex;
  align-items: center;
  justify-content: center;
`;
const TreeView = styled.div`
  flex: 1;
  min-height: 0;
  background: #fff;
  padding-top: 1px;
  border-bottom: 1px solid #c4c0b9;
`;
const TreeRow = styled.div<{ $child?: boolean; $sel?: boolean }>`
  height: 19px;
  width: ${(p) => (p.$sel ? '220px' : 'auto')};
  display: flex;
  align-items: center;
  padding-left: ${(p) => (p.$child ? '43px' : '23px')};
  background: ${(p) => (p.$sel ? '#308cc6' : 'transparent')};
  color: ${(p) => (p.$sel ? '#f4f7fa' : '#1f1f1f')};
  position: relative;
  white-space: nowrap;
`;
const TreeLabel = styled.span`
  margin-left: 6px;
`;
const Expander = styled.span<{ $open?: boolean }>`
  position: absolute;
  left: ${(p) => (p.$open ? '5px' : '7px')};
  top: ${(p) => (p.$open ? '7px' : '5px')};
  width: 0;
  height: 0;
  ${(p) =>
    p.$open
      ? 'border-left: 5px solid transparent; border-right: 5px solid transparent; border-top: 5px solid #3a3a3a;'
      : 'border-top: 5px solid transparent; border-bottom: 5px solid transparent; border-left: 5px solid #3a3a3a;'}
`;
const Splitter = styled.div`
  height: 6px;
  flex: none;
  display: flex;
  justify-content: center;
  align-items: center;
  &::after {
    content: '';
    width: 16px;
    height: 2px;
    background-image: radial-gradient(circle at 1px 1px, #b8b4ad 0.7px, transparent 0.8px);
    background-size: 3px 2px;
  }
`;
const DockBottom = styled.div`
  flex: 1;
  min-height: 0;
  display: flex;
  flex-direction: column;
`;
const LayerList = styled.div`
  flex: 1;
  min-height: 0;
  background: #fff;
  border-top: 1px solid #c4c0b9;
  overflow: hidden;
`;
const LayerRow = styled.div<{ $sel?: boolean }>`
  height: 19px;
  display: flex;
  align-items: center;
  position: relative;
  padding-left: 23px;
  background: ${(p) => (p.$sel ? '#308cc6' : 'transparent')};
  white-space: nowrap;
  overflow: hidden;
`;
const CheckBox = styled.span`
  width: 14px;
  height: 14px;
  flex: none;
  border: 1px solid #a7a39c;
  background: #fff;
  display: flex;
  align-items: center;
  justify-content: center;
  margin-right: 6px;
`;
const LayerName = styled.span<{ $sel?: boolean }>`
  margin-left: 6px;
  flex: 1;
  font-weight: 700;
  line-height: 19px;
  color: ${(p) => (p.$sel ? '#fff' : '#111')};
  overflow: hidden;
  ${(p) => (p.$sel ? 'box-shadow: inset 1px 0 #9cc8e6, inset 0 -1px #cfe4f3;' : '')}
`;
const HScroll = styled.div`
  height: 14px;
  flex: none;
  display: flex;
  background: #edebe6;
  border-top: 1px solid #c4c0b9;
`;
const ScrollBtn = styled.span<{ $w: number }>`
  width: ${(p) => p.$w}px;
  flex: none;
  display: flex;
  align-items: center;
  justify-content: center;
`;
const ScrollTrack = styled.span`
  flex: 1;
  background: linear-gradient(#f7f6f3, #ebe9e4);
  border: 1px solid #cfccc6;
  border-width: 0 1px;
`;
const ScrollEnd = styled.span`
  width: 12px;
  flex: none;
  background: #dad7d1;
`;
const ArrowL = styled.span`
  width: 0;
  height: 0;
  border-top: 4px solid transparent;
  border-bottom: 4px solid transparent;
  border-right: 4px solid #4d4d4d;
`;
const ArrowR = styled(ArrowL)`
  border-right: 0;
  border-left: 4px solid #4d4d4d;
`;

/* ---------- map ---------- */
const MapArea = styled.div`
  flex: 1;
  min-width: 0;
  padding: 2px 0 0 6px;
`;
const MapCanvas = styled.div`
  width: 100%;
  height: 100%;
  background: #a9d1de;
  border-left: 1px solid #98a2a6;
`;

/* ---------- context menu ---------- */
const ContextMenu = styled.div`
  position: absolute;
  left: 244px;
  top: 162px;
  width: 275px;
  background: #fff;
  border: 1px solid #a09d97;
  box-shadow: 1px 1px 3px rgba(0, 0, 0, 0.35);
  display: flex;
  flex-direction: column;
`;
const MenuItem = styled.div<{ $hi?: boolean }>`
  height: 25px;
  flex: none;
  display: flex;
  align-items: center;
  position: relative;
  padding: 0 0 2px 27px;
  white-space: nowrap;
  font-size: 14.500px;
  background: ${(p) => (p.$hi ? '#308cc6' : 'transparent')};
  color: ${(p) => (p.$hi ? '#f4f7fa' : '#1f1f1f')};
  ${(p) => (p.$hi ? 'box-shadow: inset 0 1px #2a79ab, inset 0 -1px #2a79ab;' : '')}
`;
const MenuLabel = styled.span`
  white-space: pre;
`;
const MenuIcon = styled.span`
  position: absolute;
  left: 5px;
  top: 4px;
  width: 17px;
  height: 17px;
  display: flex;
  align-items: center;
  justify-content: center;
`;
const MenuCheck = styled.span`
  width: 14px;
  height: 14px;
  border: 1px solid #b3afa9;
  background: #fff;
`;
const SubArrow = styled.span`
  position: absolute;
  right: 4px;
  top: 8px;
  width: 0;
  height: 0;
  border-top: 4.500px solid transparent;
  border-bottom: 4.500px solid transparent;
  border-left: 5px solid #3c3c3c;
`;
const MenuSep = styled.div`
  height: 2px;
  flex: none;
  margin: 0 4px;
  border-top: 1px solid #c9c6c0;
`;
const Cursor = styled.svg`
  position: absolute;
  left: 454px;
  top: 428px;
`;

/* ---------- status bar ---------- */
const StatusBar = styled.div`
  height: 32px;
  flex: none;
  background: #edebe6;
  display: flex;
  align-items: center;
  font-size: 12px;
  letter-spacing: -0.2px;
  padding-left: 3px;
  color: #2a2a2a;
`;
const Locator = styled.div`
  width: 268px;
  height: 25px;
  flex: none;
  background: #fff;
  border: 1px solid #bcb8b1;
  border-radius: 3px;
  display: flex;
  align-items: center;
  padding-left: 7px;
  color: #77736c;
  font-size: 14px;
  letter-spacing: 0;
  gap: 7px;
`;
const StatusText = styled.span<{ $ml?: number }>`
  margin-left: ${(p) => p.$ml ?? 0}px;
  flex: none;
  white-space: nowrap;
`;
const Field = styled.div<{ $w: number; $ml?: number }>`
  width: ${(p) => p.$w}px;
  margin-left: ${(p) => p.$ml ?? 0}px;
  height: 23px;
  flex: none;
  background: #fff;
  border: 1px solid #bcb8b1;
  border-radius: 3px;
  display: flex;
  align-items: center;
  padding-left: 5px;
  position: relative;
  overflow: hidden;
`;
const ComboBtn = styled.span`
  position: absolute;
  right: 0;
  top: 0;
  bottom: 0;
  width: 20px;
  background: #edebe6;
  border-left: 1px solid #c4c0b9;
  display: flex;
  align-items: center;
  justify-content: center;
`;
const SpinBtn = styled.span`
  position: absolute;
  right: 0;
  top: 0;
  bottom: 0;
  width: 13px;
  background: #edebe6;
  border-left: 1px solid #c4c0b9;
  display: flex;
  flex-direction: column;
  align-items: center;
  justify-content: space-evenly;
`;
const UpTri = styled.span`
  width: 0;
  height: 0;
  border-left: 4px solid transparent;
  border-right: 4px solid transparent;
  border-bottom: 5px solid #555;
`;
const DownTri = styled.span`
  width: 0;
  height: 0;
  border-left: 4px solid transparent;
  border-right: 4px solid transparent;
  border-top: 5px solid #555;
`;
const StatusIcon = styled.span<{ $ml: number }>`
  margin-left: ${(p) => p.$ml}px;
  flex: none;
  display: flex;
`;
const SmallCheck = styled(CheckBox)<{ $ml: number }>`
  width: 13px;
  height: 13px;
  margin-left: ${(p) => p.$ml}px;
  margin-right: 5px;
`;

const CheckMark = ({ s = 12 }: { s?: number }) => (
  <svg width={s} height={s} viewBox="0 0 12 12"><path d="M2 6l3 4.500L10 1" fill="none" stroke="#111" strokeWidth="2" /></svg>
);

const trees: { i: string; t: string; e?: 'c' | 'o'; child?: boolean; sel?: boolean }[] = [
  { i: 'folder', t: '/', e: 'c' },
  { i: 'gpkg', t: 'GeoPackage' },
  { i: 'feather', t: 'SpatiaLite' },
  { i: 'pg', t: 'PostGIS' },
  { i: 'mssql', t: 'MSSQL' },
  { i: 'db2', t: 'DB2' },
  { i: 'wms', t: 'WMS/WMTS' },
  { i: 'grid', t: 'Vector Tiles' },
  { i: 'xyz', t: 'XYZ Tiles', e: 'o' },
  { i: 'xyzSel', t: 'OpenStreetMap', child: true, sel: true },
  { i: 'wcs', t: 'WCS' },
  { i: 'wfs', t: 'WFS / OGC API - Features' },
  { i: 'ows', t: 'OWS' },
  { i: 'arc', t: 'ArcGIS Map Service' },
  { i: 'arc', t: 'ArcGIS Feature Service' },
  { i: 'geonode', t: 'GeoNode' },
];

const menuBar: [number, React.ReactNode][] = [
  [63, <>Pro<U>j</U>ect</>], [41, <><U>E</U>dit</>], [48, <><U>V</U>iew</>], [51, <><U>L</U>ayer</>], [71, <><U>S</U>ettings</>],
  [64, <><U>P</U>lugins</>], [59, <>Vect<U>o</U>r</>], [58, <><U>R</U>aster</>], [78, <><U>D</U>atabase</>], [45, <><U>W</U>eb</>],
  [52, <><U>M</U>esh</>], [87, <>Pro<U>c</U>essing</>], [40, <><U>H</U>elp</>],
];

type MI = { k: string; icon?: string; check?: boolean; label?: React.ReactNode; hi?: boolean; sub?: boolean; sep?: boolean };
const menuItems: MI[] = [
  { k: 'a', icon: 'magIcon', label: <><U>Z</U>oom to Layer</> },
  { k: 'b', icon: 'magSel', label: <><U>Z</U>oom to Selection</> },
  { k: 'c', icon: 'overview', label: <><U>S</U>how in Overview</> },
  { k: 'd', check: true, label: 'Show Feature Count' },
  { k: 'e', label: 'Copy Layer' },
  { k: 'f', label: <>Re<U>n</U>ame Layer</> },
  { k: 's1', sep: true },
  { k: 'g', icon: 'duplicate', label: <><U>D</U>uplicate Layer</> },
  { k: 'h', icon: 'removeMenu', label: <><U>R</U>emove Layer…</> },
  { k: 's2', sep: true },
  { k: 'i', label: <>Move to <U>B</U>ottom</> },
  { k: 's3', sep: true },
  { k: 'j', icon: 'table', label: <><U>O</U>pen Attribute Table</> },
  { k: 'l', hi: true, label: <><U>F</U>ilter…</> },
  { k: 'm', label: 'Change Data Source…' },
  { k: 's4', sep: true },
  { k: 'n', label: <><U>S</U>et Layer Scale Visibility…</> },
  { k: 'o', label: 'Set CRS', sub: true },
  { k: 's5', sep: true },
  { k: 'p', label: 'Export', sub: true },
  { k: 's6', sep: true },
  { k: 'q', label: 'Styles', sub: true },
  { k: 'r', label: <><U>P</U>roperties…</> },
];

export default function App() {
  return (
    <Page_>
      <Global />
      <TitleBar>
        *Untitled Project — QGIS
        <WindowButtons>
          <WinBtn><svg width="10" height="10"><path d="M1 5h8" stroke="#333" strokeWidth="1.500" /></svg></WinBtn>
          <WinBtn><svg width="10" height="10"><rect x="1" y="2" width="8" height="6" fill="none" stroke="#333" strokeWidth="1.200" /></svg></WinBtn>
          <WinBtn $close><svg width="10" height="10"><path d="M2 2l6 6M8 2l-6 6" stroke="#3a1a0c" strokeWidth="1.500" /></svg></WinBtn>
        </WindowButtons>
      </TitleBar>
      <MenuBar>
        {menuBar.map(([w, l], i) => <MenuTitle key={i} $w={w}>{l}</MenuTitle>)}
      </MenuBar>
      <ToolRow items={tb1} h={39} />
      <ToolRow items={tb2} h={39} />
      <ToolRow items={tb3} h={38} />

      <Body>
        <LeftPanels>
          <DockTop>
            <DockTitle>Browser</DockTitle>
            <DockIcons>
              {['addSel', 'refresh', 'filter', 'collapse', 'info'].map((n) => (
                <DockBtn key={n}><Icon n={n} s={16} /></DockBtn>
              ))}
            </DockIcons>
            <TreeView>
              {trees.map((r) => (
                <TreeRow key={r.t} $child={r.child} $sel={r.sel}>
                  {r.e && <Expander $open={r.e === 'o'} />}
                  <Icon n={r.i} s={16} />
                  <TreeLabel>{r.t}</TreeLabel>
                </TreeRow>
              ))}
            </TreeView>
          </DockTop>
          <Splitter />
          <DockBottom>
            <DockTitle>Layers</DockTitle>
            <DockIcons>
              <DockBtn><Icon n="brush" s={16} /></DockBtn>
              <DockBtn><Icon n="addGroup" s={16} /></DockBtn>
              <DockBtn><Icon n="eye" s={17} /></DockBtn>
              <DockBtn><Icon n="filter" s={16} /></DockBtn>
              <DockBtn $w={39}><Icon n="expr" s={17} /><Drop /></DockBtn>
              <DockBtn><Icon n="expand" s={16} /></DockBtn>
              <DockBtn><Icon n="collapse" s={16} /></DockBtn>
              <DockBtn><Icon n="removeLyr" s={16} /></DockBtn>
            </DockIcons>
            <LayerList>
              <LayerRow $sel>
                <CheckBox><CheckMark /></CheckBox>
                <Icon n="pointSym" s={16} />
                <LayerName $sel>images authcfg='31c651a' image-map</LayerName>
              </LayerRow>
              <LayerRow>
                <Expander />
                <CheckBox><CheckMark /></CheckBox>
                <Icon n="osm" s={16} />
                <LayerName>OpenStreetMap</LayerName>
              </LayerRow>
            </LayerList>
            <HScroll>
              <ScrollBtn $w={10}><ArrowL /></ScrollBtn>
              <ScrollTrack />
              <ScrollEnd />
              <ScrollBtn $w={14}><ArrowR /></ScrollBtn>
            </HScroll>
          </DockBottom>
        </LeftPanels>
        <MapArea>
          <MapCanvas>
            <svg width="1232" height="673" viewBox={`${ORIGIN_X} ${ORIGIN_Y} 1232 673`} style={{ display: 'block' }}>
              {greyDots.map(([x, y], i) => (
                <circle key={i} cx={x} cy={y} r={3.9} fill="#7e8486" stroke="#2e3335" strokeWidth={1} />
              ))}
              {yellowDots.map(([x, y], i) => (
                <circle key={i} cx={x} cy={y} r={3.9} fill="#ffff00" stroke="#2e3335" strokeWidth={1} />
              ))}
            </svg>
          </MapCanvas>
        </MapArea>
      </Body>

      <StatusBar>
        <Locator><Search size={14} color="#8a8680" />Type to locate (Ctrl+K)</Locator>
        <StatusText $ml={8}>Getting tiles.</StatusText>
        <StatusText $ml={269}>Coordinate</StatusText>
        <Field $w={138} $ml={4}>-88.466298,-7.074034</Field>
        <StatusIcon $ml={4}><Icon n="wand" s={16} /></StatusIcon>
        <StatusText $ml={13}>Scale</StatusText>
        <Field $w={95} $ml={4}>1:2375<ComboBtn><DownTri /></ComboBtn></Field>
        <StatusIcon $ml={13}><Icon n="lock" s={14} /></StatusIcon>
        <StatusText $ml={8}>Magnifier</StatusText>
        <Field $w={98} $ml={3}>100%<SpinBtn><UpTri /><DownTri /></SpinBtn></Field>
        <StatusText $ml={9}>Rotation</StatusText>
        <Field $w={93} $ml={10}>0,0 °<SpinBtn><UpTri /><DownTri /></SpinBtn></Field>
        <SmallCheck $ml={7}><CheckMark s={10} /></SmallCheck>
        <StatusText>Render</StatusText>
        <StatusIcon $ml={17}><Icon n="crs" s={14} /></StatusIcon>
        <StatusText $ml={6}>EPSG:4326</StatusText>
        <StatusIcon $ml={19}><Icon n="bubble" s={16} /></StatusIcon>
      </StatusBar>

      <ContextMenu>
        {menuItems.map((m) =>
          m.sep ? (
            <MenuSep key={m.k} />
          ) : (
            <MenuItem key={m.k} $hi={m.hi}>
              {m.icon && <MenuIcon><Icon n={m.icon} s={16} /></MenuIcon>}
              {m.check && <MenuIcon><MenuCheck /></MenuIcon>}
              <MenuLabel>{m.label}</MenuLabel>
              {m.sub && <SubArrow />}
            </MenuItem>
          ),
        )}
      </ContextMenu>
      <Cursor width="14" height="20" viewBox="0 0 14 20">
        <path d="M1.500 1v15l3.500-3 2.500 6 2.500-1-2.500-6h5z" fill="#fff" stroke="#111" strokeWidth="1.100" />
      </Cursor>
    </Page_>
  );
}
